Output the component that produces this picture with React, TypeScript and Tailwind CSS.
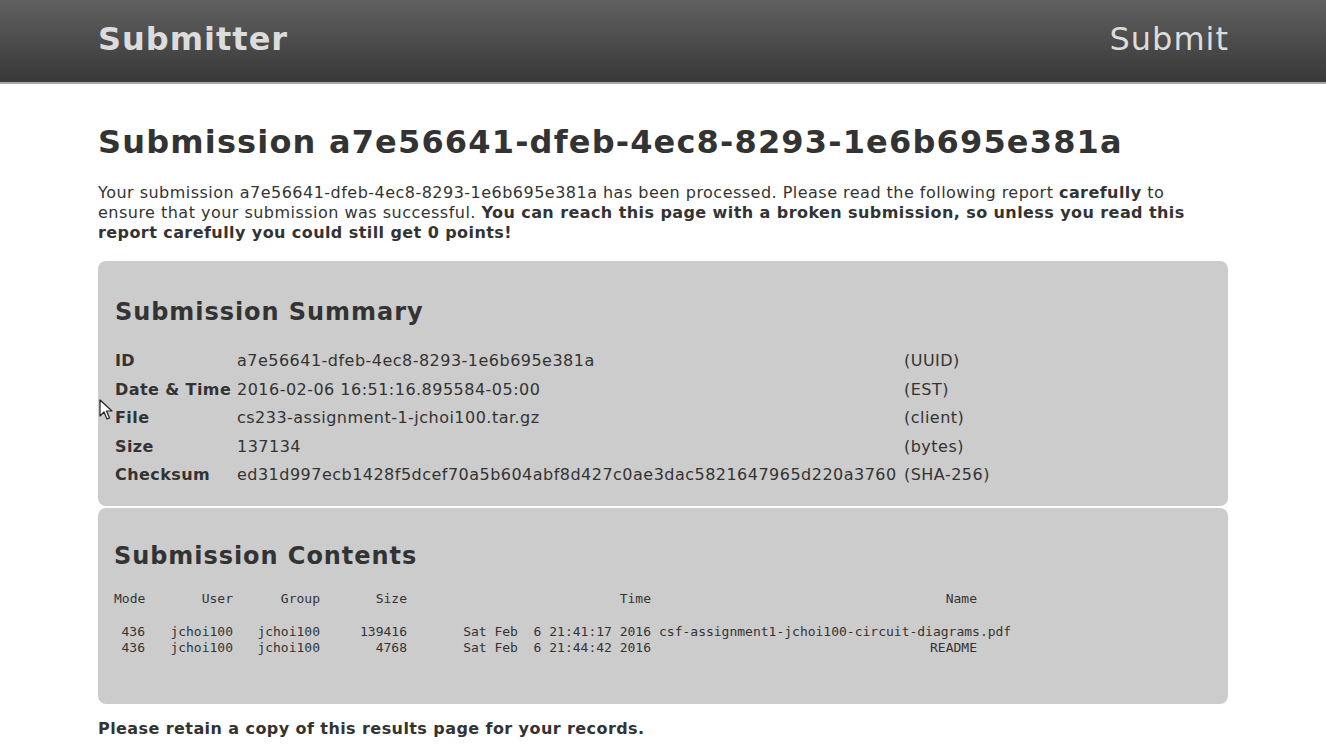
import React from "react";

const uuid = "a7e56641-dfeb-4ec8-8293-1e6b695e381a";

const summary = [
  { label: "ID", value: uuid, note: "(UUID)" },
  { label: "Date & Time", value: "2016-02-06 16:51:16.895584-05:00", note: "(EST)" },
  { label: "File", value: "cs233-assignment-1-jchoi100.tar.gz", note: "(client)" },
  { label: "Size", value: "137134", note: "(bytes)" },
  {
    label: "Checksum",
    value: "ed31d997ecb1428f5dcef70a5b604abf8d427c0ae3dac5821647965d220a3760",
    note: "(SHA-256)",
  },
];

const files = [
  {
    mode: "436",
    user: "jchoi100",
    group: "jchoi100",
    size: "139416",
    time: "Sat Feb  6 21:41:17 2016",
    name: "csf-assignment1-jchoi100-circuit-diagrams.pdf",
  },
  {
    mode: "436",
    user: "jchoi100",
    group: "jchoi100",
    size: "4768",
    time: "Sat Feb  6 21:44:42 2016",
    name: "README",
  },
];

function FileRow({ f, header }: { f: (typeof files)[number]; header?: boolean }) {
  return (
    <div className="flex whitespace-pre leading-[16px]">
      <div className="w-[31px] shrink-0 text-right">{f.mode}</div>
      <div className="w-[88px] shrink-0 text-right">{f.user}</div>
      <div className="w-[87px] shrink-0 text-right">{f.group}</div>
      <div className="w-[87px] shrink-0 text-right">{f.size}</div>
      <div className="w-[244px] shrink-0 text-right">{f.time}</div>
      <div className={`w-[326px] shrink-0 text-right ${header ? "" : "pl-2"}`}>{f.name}</div>
    </div>
  );
}

export default function App() {
  return (
    <div className="relative min-h-screen bg-white text-[#333] font-['DejaVu_Sans',Verdana,sans-serif]">
      {/* Header */}
      <header className="h-[84px] border-b-2 border-[#a8a8a8] bg-gradient-to-b from-[#616161] to-[#383838] px-[98px] flex items-center justify-between tracking-[1px]">
        <span className="text-[32px] font-bold text-[#dcdcdc] leading-none -mt-1">Submitter</span>
        <span className="text-[32px] text-[#dcdcdc] leading-none -mt-1 -mr-[1px]">Submit</span>
      </header>

      <main className="px-[98px] tracking-[0.48px]">
        <h1 className="mt-[38px] text-[32px] font-bold leading-[40px] tracking-[1.17px]">
          Submission {uuid}
        </h1>

        <p className="mt-[21px] pr-[12px] text-[16px] leading-[20px]">
          Your submission {uuid} has been processed. Please read the following report{" "}
          <b className="tracking-[0.42px]">carefully</b> to ensure that your submission was
          successful.{" "}
          <b className="tracking-[0.42px]">
            You can reach this page with a broken submission, so unless you read this report
            carefully you could still get 0 points!
          </b>
        </p>

        {/* Summary */}
        <section className="mt-[18px] rounded-lg bg-[#cccccc] pl-[17px] pr-4 pt-[35px] pb-[16px]">
          <h2 className="text-[24px] font-bold leading-[30px] mt-[1px] tracking-[0.94px]">
            Submission Summary
          </h2>
          <div className="mt-5 grid grid-cols-[122px_667px_auto] text-[16px] leading-[28.5px]">
            {summary.map((r) => (
              <React.Fragment key={r.label}>
                <div className="font-bold tracking-[0.42px]">{r.label}</div>
                <div>{r.value}</div>
                <div>{r.note}</div>
              </React.Fragment>
            ))}
          </div>
        </section>

        {/* Contents */}
        <section className="mt-[2px] rounded-lg bg-[#cccccc] pl-4 pr-4 pt-[33px] pb-[48px]">
          <h2 className="text-[24px] font-bold leading-[30px] tracking-[0.94px]">
            Submission Contents
          </h2>
          <div className="mt-5 text-[13px] tracking-normal font-['DejaVu_Sans_Mono',monospace] text-[#333]">
            <FileRow
              header
              f={{ mode: "Mode", user: "User", group: "Group", size: "Size", time: "Time", name: "Name" }}
            />
            <div className="mt-[17px]">
              {files.map((f, i) => (
                <FileRow key={i} f={f} />
              ))}
            </div>
          </div>
        </section>

        <p className="mt-[15px] text-[16px] font-bold leading-[20px] tracking-[0.42px]">
          Please retain a copy of this results page for your records.
        </p>
      </main>

      {/* mouse pointer */}
      <svg
        className="absolute left-[99px] top-[399px]"
        width="14"
        height="22"
        viewBox="0 0 14 22"
      >
        <path
          d="M1 1 L1 17 L5 13 L8 20 L10.5 19 L7.5 12 L13 12 Z"
          fill="#fff"
          stroke="#222"
          strokeWidth="1.2"
          strokeLinejoin="round"
        />
      </svg>
    </div>
  );
}
